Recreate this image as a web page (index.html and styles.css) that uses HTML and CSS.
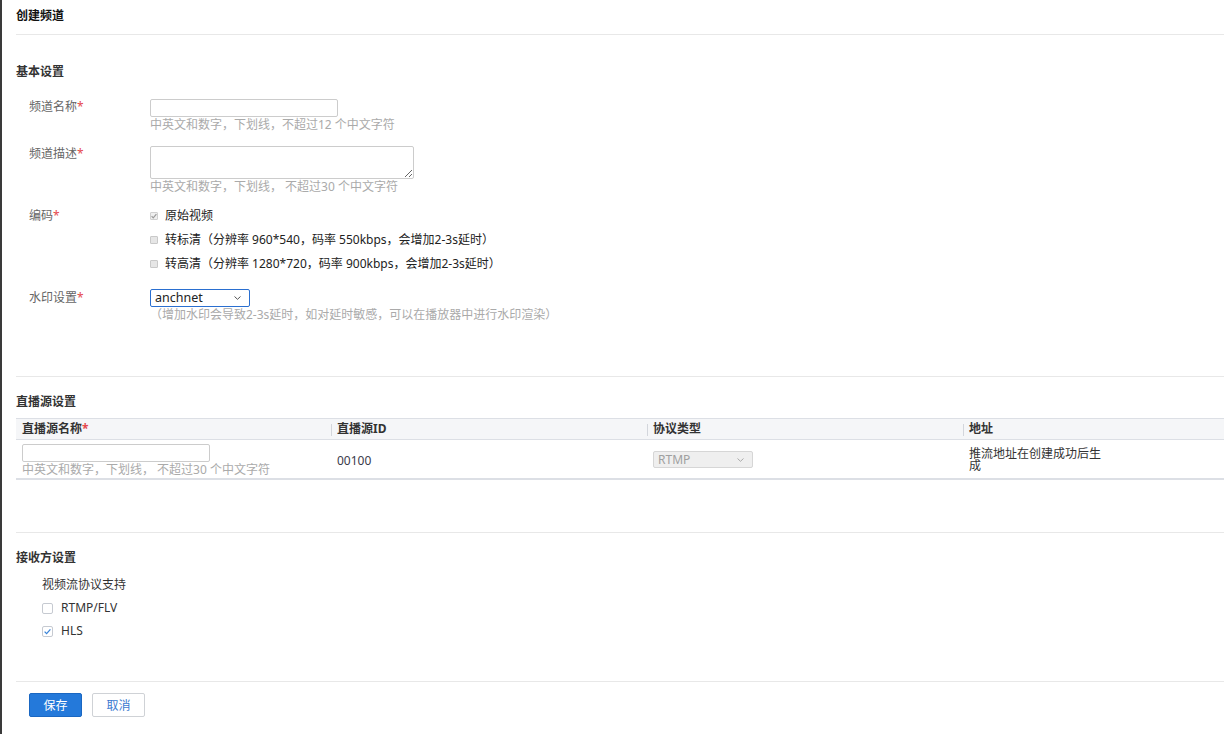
FILE: index.html
```html
<!DOCTYPE html>
<html lang="zh-CN">
<head>
<meta charset="utf-8">
<title>创建频道</title>
<link rel="stylesheet" href="styles.css">
</head>
<body>
<div class="page">
  <header class="page-head"><h1 class="page-title">创建频道</h1></header>

  <section class="section section-basic">
    <h2 class="section-title">基本设置</h2>
    <div class="form">
      <div class="form-row">
        <label class="label">频道名称<span class="req">*</span></label>
        <div class="ctrl">
          <input class="text-input" type="text">
          <div class="hint">中英文和数字，下划线，不超过12 个中文字符</div>
        </div>
      </div>
      <div class="form-row">
        <label class="label">频道描述<span class="req">*</span></label>
        <div class="ctrl">
          <textarea class="textarea"></textarea>
          <div class="hint">中英文和数字，下划线， 不超过30 个中文字符</div>
        </div>
      </div>
      <div class="form-row">
        <label class="label">编码<span class="req">*</span></label>
        <div class="ctrl options">
          <div class="option"><span class="mini-box checked"><svg viewBox="0 0 8 8" width="8" height="8"><polyline points="1.6,4.2 3.2,5.8 6.4,2.2" fill="none" stroke="#9a9a9a" stroke-width="1.2"/></svg></span><span>原始视频</span></div>
          <div class="option"><span class="mini-box"></span><span>转标清（分辨率 960*540，码率 550kbps，会增加2-3s延时）</span></div>
          <div class="option"><span class="mini-box"></span><span>转高清（分辨率 1280*720，码率 900kbps，会增加2-3s延时）</span></div>
        </div>
      </div>
      <div class="form-row row-watermark">
        <label class="label label-mid">水印设置<span class="req">*</span></label>
        <div class="ctrl">
          <div class="select select-active"><span>anchnet</span><svg class="chev" viewBox="0 0 7 4" width="7" height="4"><polyline points="0.5,0.5 3.5,3.3 6.5,0.5" fill="none" stroke="#555" stroke-width="1"/></svg></div>
          <div class="hint">（增加水印会导致2-3s延时，如对延时敏感，可以在播放器中进行水印渲染）</div>
        </div>
      </div>
    </div>
  </section>

  <section class="section section-source">
    <h2 class="section-title">直播源设置</h2>
    <div class="table">
      <div class="tr thead">
        <div class="th">直播源名称<span class="req">*</span></div>
        <div class="th">直播源ID</div>
        <div class="th">协议类型</div>
        <div class="th">地址</div>
      </div>
      <div class="tr tbody">
        <div class="td td-name">
          <input class="text-input" type="text">
          <div class="hint">中英文和数字，下划线， 不超过30 个中文字符</div>
        </div>
        <div class="td td-id">00100</div>
        <div class="td td-proto">
          <div class="select select-disabled"><span>RTMP</span><svg class="chev" viewBox="0 0 7 4" width="7" height="4"><polyline points="0.5,0.5 3.5,3.3 6.5,0.5" fill="none" stroke="#aaa" stroke-width="1"/></svg></div>
        </div>
        <div class="td td-addr">推流地址在创建成功后生成</div>
      </div>
    </div>
  </section>

  <section class="section section-recv">
    <h2 class="section-title">接收方设置</h2>
    <div class="recv">
      <div class="recv-label">视频流协议支持</div>
      <div class="check-row"><span class="box"></span><span>RTMP/FLV</span></div>
      <div class="check-row"><span class="box"><svg viewBox="0 0 11 11" width="11" height="11"><polyline points="2.6,5.6 4.6,7.6 8.4,3.4" fill="none" stroke="#3a84d8" stroke-width="1.3"/></svg></span><span>HLS</span></div>
    </div>
  </section>

  <footer class="actions">
    <button class="btn btn-primary" type="button">保存</button>
    <button class="btn btn-default" type="button">取消</button>
  </footer>
</div>
</body>
</html>
```
FILE: styles.css
```css
* { box-sizing: border-box; }
html, body { margin: 0; height: 100%; }
body {
  font-family: "Noto Sans", "Noto Sans CJK SC", sans-serif;
  font-size: 12px;
  color: #333;
  background: #fff;
}
.page {
  min-height: 100%;
  border-left: 2px solid #3a3a3a;
  padding-left: 14px;
}
.page-head {
  height: 35px;
  padding-top: 8px;
  border-bottom: 1px solid #e8e8e8;
}
.page-title {
  margin: 0;
  font-size: 12px;
  line-height: 16px;
  font-weight: bold;
  color: #111;
}
.section {
  border-bottom: 1px solid #e8e8e8;
  padding-top: 17px;
}
.section-basic { padding-top: 29px; padding-bottom: 53px; }
.section-source { padding-bottom: 52px; }
.section-recv { padding-bottom: 42px; }
.section-title {
  margin: 0;
  font-size: 12px;
  line-height: 16px;
  font-weight: bold;
  color: #333;
}

/* form */
.form { margin-top: 19px; padding-left: 13px; }
.form-row { display: grid; grid-template-columns: 121px auto; }
.form-row + .form-row { margin-top: 13px; }
.form-row.row-watermark { margin-top: 17px; }
.label { line-height: 16px; color: #666; }
.label-mid { padding-top: 1px; }
.req { color: #e5484d; }
.text-input {
  display: block;
  width: 188px;
  height: 18px;
  margin: 0;
  border: 1px solid #ccc;
  border-radius: 2px;
  background: #fff;
}
.textarea {
  display: block;
  width: 264px;
  height: 33px;
  margin: 0;
  border: 1px solid #ccc;
  border-radius: 2px;
  resize: vertical;
}
.hint { line-height: 16px; color: #aaa; white-space: nowrap; }

.options .option {
  display: flex;
  align-items: center;
  gap: 7px;
  line-height: 16px;
  color: #222;
}
.options .option + .option { margin-top: 8px; }
.mini-box {
  width: 8px;
  height: 8px;
  border: 1px solid #c9c9c9;
  border-radius: 1px;
  background: #e6e6e6;
  display: flex;
}
.mini-box.checked { background: #efefef; border-color: #d0d0d0; }
.mini-box svg { margin: -1px; }

.select {
  width: 100px;
  height: 18px;
  border: 1px solid #ccc;
  border-radius: 2px;
  display: flex;
  align-items: center;
  justify-content: space-between;
  padding: 0 8px 0 4px;
  line-height: 16px;
}
.select-active { border-color: #2a6fd0; color: #222; font-size: 12.5px; }
.select-disabled { background: #efefef; border-color: #d6d6d6; color: #a0a0a0; width: 100px; height: 17px; }

/* table */
.table {
  margin-top: 8px;
  border-top: 1px solid #dcdfe5;
  border-bottom: 2px solid #dcdfe5;
}
.tr { display: grid; grid-template-columns: 315px 316px 316px 1fr; }
.thead {
  height: 21px;
  background: #f5f6f8;
  border-bottom: 1px solid #dcdfe5;
  align-items: center;
}
.th {
  position: relative;
  padding-left: 6px;
  line-height: 16px;
  font-weight: bold;
  color: #333;
}
.th + .th::before {
  content: "";
  position: absolute;
  left: 0;
  top: 3px;
  width: 1px;
  height: 12px;
  background: #d3d6dc;
}
.tbody { height: 38px; align-items: start; }
.td { padding-left: 6px; }
.td-name { padding-top: 4px; }
.td-id { padding-top: 13px; line-height: 16px; color: #3a3a4a; }
.td-proto { padding-top: 11px; }
.td-addr { padding-top: 8px; line-height: 12px; width: 142px; color: #333; }

/* receivers */
.recv { margin-top: 11px; padding-left: 26px; }
.recv-label { line-height: 16px; color: #333; }
.check-row {
  display: flex;
  align-items: center;
  gap: 8px;
  margin-top: 7px;
  line-height: 16px;
  color: #333;
}
.box {
  width: 11px;
  height: 11px;
  border: 1px solid #c6cad1;
  border-radius: 2px;
  background: #fff;
  display: flex;
}
.box svg { margin: -1px; }

/* actions */
.actions { padding-top: 11px; padding-left: 13px; display: flex; gap: 10px; }
.btn {
  height: 24px;
  width: 53px;
  border-radius: 2px;
  font-family: inherit;
  font-size: 12px;
  padding: 0;
  cursor: pointer;
}
.btn-primary { background: #2479da; border: 1px solid #1a67c2; color: #fff; }
.btn-default { background: #fff; border: 1px solid #cfd2d6; color: #3b7ad0; }
```
